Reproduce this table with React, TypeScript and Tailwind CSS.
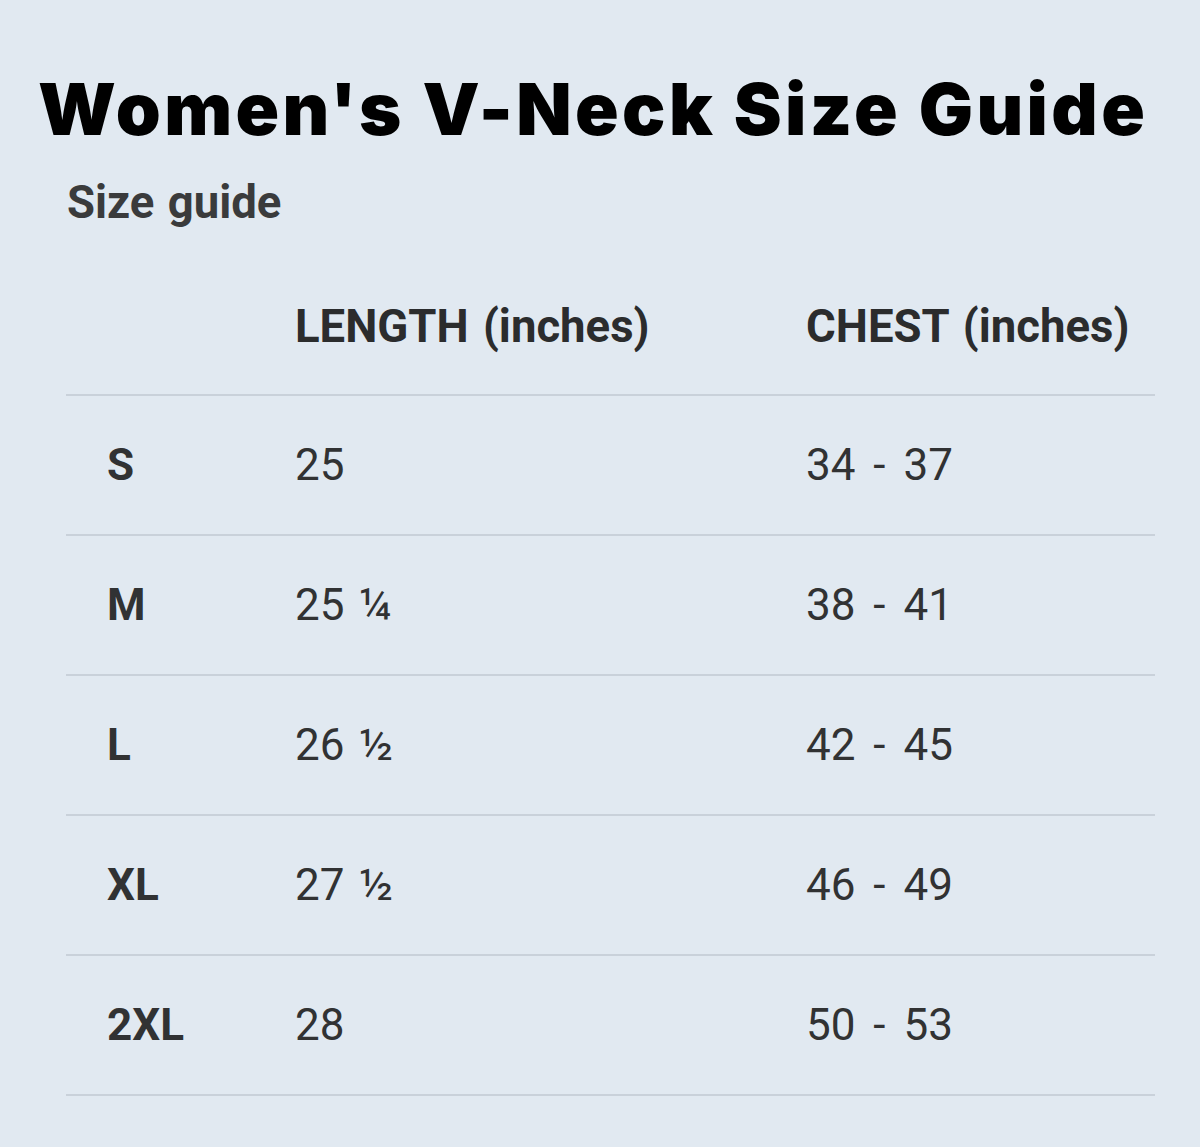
const rows = [
  { size: "S", length: "25", chest: "34 - 37" },
  { size: "M", length: "25 ¼", chest: "38 - 41" },
  { size: "L", length: "26 ½", chest: "42 - 45" },
  { size: "XL", length: "27 ½", chest: "46 - 49" },
  { size: "2XL", length: "28", chest: "50 - 53" },
];

export default function App() {
  return (
    <div className="w-[1200px] h-[1147px] bg-[#e1e9f1] overflow-hidden">
      <h1 className="pt-[73px] pl-[38px] text-[72px] leading-[72px] font-black text-black font-['Inter',sans-serif] tracking-[3.4px] whitespace-nowrap">
        Women's V-Neck Size Guide
      </h1>
      <div className="font-['Roboto',sans-serif] text-[44px] leading-[44px]">
        <h2 className="mt-[36px] pl-[67px] text-[45.5px] font-bold text-[#3a3b3c] [word-spacing:2px]">Size guide</h2>
        <div className="mt-[34px] ml-[66px] w-[1089px]">
          <div className="flex items-center h-[137px] border-b-2 border-[#c9d1da] text-[45.5px] font-bold text-[#2b2c2d] [word-spacing:3px]">
            <div className="w-[229px]"></div>
            <div className="w-[511px]">LENGTH (inches)</div>
            <div>CHEST (inches)</div>
          </div>
          {rows.map((row) => (
            <div
              key={row.size}
              className="flex items-center h-[140px] border-b-2 border-[#c9d1da] text-[#313233]"
            >
              <div className="w-[229px] pl-[41px] font-bold">{row.size}</div>
              <div className="w-[511px] [word-spacing:4px]">{row.length}</div>
              <div className="[word-spacing:7px]">{row.chest}</div>
            </div>
          ))}
        </div>
      </div>
    </div>
  );
}
